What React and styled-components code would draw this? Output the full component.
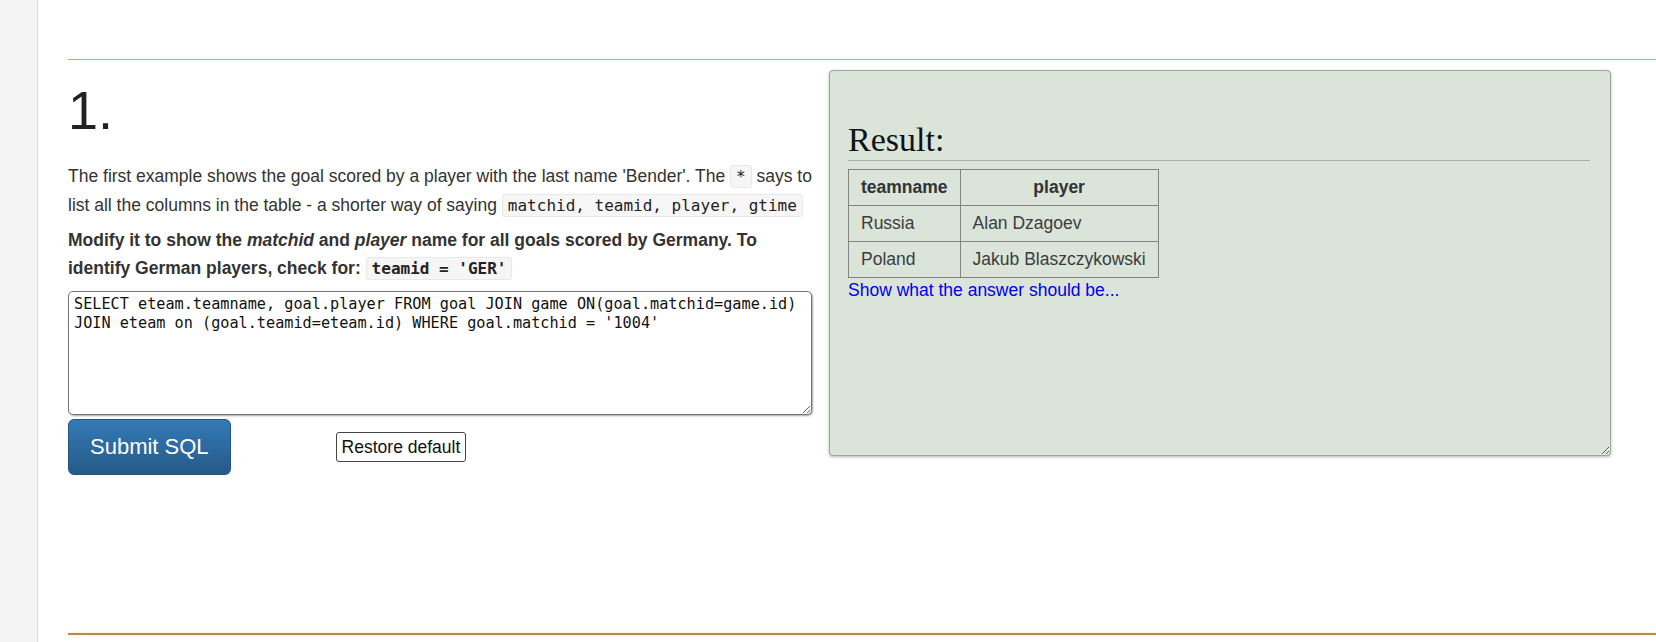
import React from "react";
import styled, { createGlobalStyle } from "styled-components";

const GlobalStyle = createGlobalStyle`
  html, body {
    margin: 0;
    padding: 0;
    background: #fff;
  }
  body {
    font-family: "Liberation Sans", Arial, sans-serif;
    font-size: 17.5px;
    color: #333;
    overflow: hidden;
  }
`;

const Page = styled.div`
  display: flex;
  min-height: 100vh;
`;

const Sidebar = styled.div`
  width: 37px;
  flex-shrink: 0;
  background: #f4f4f4;
  border-right: 1px solid #c3e1ee;
`;

const Main = styled.div`
  flex: 1;
  padding: 59px 0 0 30px;
`;

const Rule = styled.div`
  height: ${({ $thick }) => ($thick ? "2px" : "1px")};
  background: ${({ $thick }) => ($thick ? "#b48d4c" : "#dfa15b")};
  box-shadow: ${({ $thick }) => ($thick ? "0 0 3px #f7e3a8" : "none")};
`;

const Section = styled.div`
  display: flex;
  gap: 17px;
  min-height: 573px;
`;

const Left = styled.div`
  width: 744px;
  flex-shrink: 0;
`;

const Number = styled.h1`
  margin: 21px 0 0;
  font-size: 54px;
  line-height: 59px;
  font-weight: normal;
  color: #222;
`;

const Para = styled.p`
  margin: ${({ $first }) => ($first ? "22px 0 0" : "6px 0 0")};
  line-height: 28px;
  font-weight: ${({ $bold }) => ($bold ? "bold" : "normal")};
  color: #333;
`;

const Code = styled.code`
  font-family: "DejaVu Sans Mono", "Liberation Mono", monospace;
  font-size: 16px;
  font-weight: ${({ $bold }) => ($bold ? "bold" : "normal")};
  color: #222;
  background: #f6f6f6;
  border: 1px solid #e8e8e8;
  border-radius: 3px;
  padding: 1px 5px;
`;

const Editor = styled.textarea`
  display: block;
  box-sizing: border-box;
  width: 744px;
  height: 124px;
  margin: 8px 0 0;
  padding: 3px 5px;
  font-family: "DejaVu Sans Mono", "Liberation Mono", monospace;
  font-size: 15.2px;
  line-height: 19px;
  color: #111;
  border: 1px solid #767676;
  border-radius: 5px;
  box-shadow: 1px 1px 2px rgba(0, 0, 0, 0.35);
  resize: both;
  outline: none;
`;

const Actions = styled.div`
  display: flex;
  align-items: center;
  margin-top: 4px;
`;

const SubmitButton = styled.button`
  height: 56px;
  padding: 0 21px;
  font-family: "Liberation Sans", Arial, sans-serif;
  font-size: 22px;
  color: #fff;
  background-image: linear-gradient(to bottom, #337ab7 0, #265a88 100%);
  border: 1px solid #245580;
  border-radius: 6px;
  cursor: pointer;
`;

const RestoreButton = styled.button`
  margin-left: 105px;
  height: 30px;
  padding: 0 5px;
  font-family: "Liberation Sans", Arial, sans-serif;
  font-size: 17.5px;
  color: #111;
  background: #fff;
  border: 1px solid #444;
  border-radius: 3px;
  cursor: pointer;
`;

const ResultPanel = styled.div`
  box-sizing: border-box;
  width: 782px;
  height: 386px;
  margin-top: 10px;
  padding: 0 20px 0 18px;
  background: #dae4d9;
  border: 1px solid #9ea69d;
  border-radius: 4px;
  box-shadow: 0 1px 3px rgba(0, 0, 0, 0.3);
  resize: both;
  overflow: auto;
`;

const ResultTitle = styled.h2`
  margin: 50px 0 0;
  padding-bottom: 2px;
  font-family: "Liberation Serif", Georgia, serif;
  font-size: 34px;
  line-height: 37px;
  font-weight: normal;
  color: #111;
  border-bottom: 1px solid #a8aea7;
`;

const Table = styled.table`
  margin-top: 8px;
  border-collapse: collapse;
  font-size: 17.5px;
  color: #3a3d40;
`;

const Cell = styled.td`
  height: 35px;
  padding: 0 12px;
  border: 1px solid #808580;
  text-align: ${({ $center }) => ($center ? "center" : "left")};
  font-weight: ${({ $head }) => ($head ? "bold" : "normal")};
  color: ${({ $head }) => ($head ? "#2f3336" : "#3a3d40")};
`;

const AnswerLink = styled.a`
  display: inline-block;
  margin-top: 2px;
  color: #0000ee;
  text-decoration: none;
  font-size: 17.5px;
  cursor: pointer;
`;

const rows = [
  { team: "Russia", player: "Alan Dzagoev" },
  { team: "Poland", player: "Jakub Blaszczykowski" },
];

const sql =
  "SELECT eteam.teamname, goal.player FROM goal JOIN game ON(goal.matchid=game.id)\nJOIN eteam on (goal.teamid=eteam.id) WHERE goal.matchid = '1004'";

export default function App() {
  return (
    <>
      <GlobalStyle />
      <Page>
        <Sidebar />
        <Main>
          <Rule />
          <Section>
            <Left>
              <Number>1.</Number>
              <Para $first>
                The first example shows the goal scored by a player with the last name 'Bender'. The{" "}
                <Code>*</Code> says to list all the columns in the table - a shorter way of saying{" "}
                <Code>matchid, teamid, player, gtime</Code>
              </Para>
              <Para $bold>
                Modify it to show the <i>matchid</i> and <i>player</i> name for all goals scored by Germany. To
                identify German players, check for: <Code $bold>teamid = 'GER'</Code>
              </Para>
              <Editor defaultValue={sql} spellCheck={false} />
              <Actions>
                <SubmitButton>Submit SQL</SubmitButton>
                <RestoreButton>Restore default</RestoreButton>
              </Actions>
            </Left>
            <ResultPanel>
              <ResultTitle>Result:</ResultTitle>
              <Table>
                <tbody>
                  <tr>
                    <Cell as="th" $head>teamname</Cell>
                    <Cell as="th" $head $center>player</Cell>
                  </tr>
                  {rows.map((r) => (
                    <tr key={r.team}>
                      <Cell>{r.team}</Cell>
                      <Cell>{r.player}</Cell>
                    </tr>
                  ))}
                </tbody>
              </Table>
              <AnswerLink>Show what the answer should be...</AnswerLink>
            </ResultPanel>
          </Section>
          <Rule $thick />
        </Main>
      </Page>
    </>
  );
}
